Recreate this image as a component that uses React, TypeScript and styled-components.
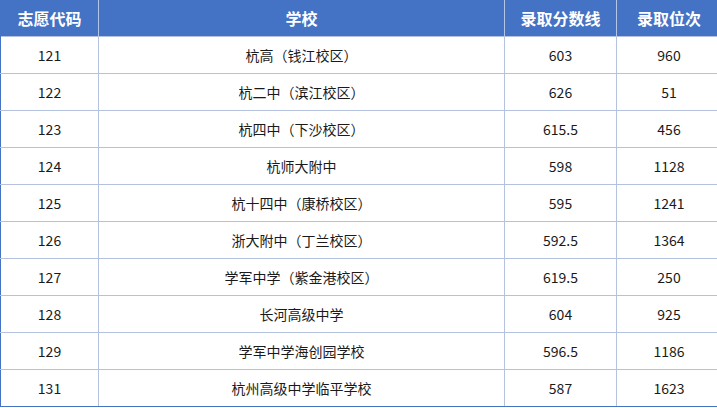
import React from 'react'
import styled, { createGlobalStyle } from 'styled-components'

const GlobalStyle = createGlobalStyle`
	html, body {
		margin: 0;
		padding: 0;
		background: #ffffff;
	}
	body {
		font-family: 'Noto Sans CJK SC', 'Noto Sans', sans-serif;
	}
`

const Table = styled.table`
	width: 717px;
	border-collapse: collapse;
	table-layout: fixed;
	border: 1px solid #4472c4;
	border-top: none;
`

const HeadCell = styled.th<{ $w: number }>`
	width: ${({ $w }) => $w}px;
	height: 36px;
	padding: 0;
	background: #4472c4;
	color: #ffffff;
	font-size: 16px;
	font-weight: 700;
	line-height: 20px;
	text-align: center;
	border-left: 1px solid #b4c6e7;
	&:first-child {
		border-left: 1px solid #4472c4;
	}
	&:last-child {
		border-right: 1px solid #4472c4;
	}
`

const Row = styled.tr`
	height: 37px;
`

const Cell = styled.td`
	padding: 0;
	color: #1a1a1a;
	font-size: 14px;
	line-height: 20px;
	text-align: center;
	border: 1px solid #b4c2e0;
	&:first-child {
		border-left: 1px solid #4472c4;
	}
	&:last-child {
		border-right: 1px solid #4472c4;
	}
`

const LastRow = styled(Row)`
	& > td {
		border-bottom: 1px solid #4472c4;
	}
`

const rows = [
	['121', '杭高（钱江校区）', '603', '960'],
	['122', '杭二中（滨江校区）', '626', '51'],
	['123', '杭四中（下沙校区）', '615.5', '456'],
	['124', '杭师大附中', '598', '1128'],
	['125', '杭十四中（康桥校区）', '595', '1241'],
	['126', '浙大附中（丁兰校区）', '592.5', '1364'],
	['127', '学军中学（紫金港校区）', '619.5', '250'],
	['128', '长河高级中学', '604', '925'],
	['129', '学军中学海创园学校', '596.5', '1186'],
	['131', '杭州高级中学临平学校', '587', '1623'],
]

const App: React.FC = () => {
	return (
		<>
			<GlobalStyle />
			<Table>
				<thead>
					<tr>
						<HeadCell $w={97}>志愿代码</HeadCell>
						<HeadCell $w={405}>学校</HeadCell>
						<HeadCell $w={111}>录取分数线</HeadCell>
						<HeadCell $w={104}>录取位次</HeadCell>
					</tr>
				</thead>
				<tbody>
					{rows.map((r, idx) => {
						const R = idx === rows.length - 1 ? LastRow : Row
						return (
							<R key={r[0]}>
								{r.map((c, i) => (
									<Cell key={i}>{c}</Cell>
								))}
							</R>
						)
					})}
				</tbody>
			</Table>
		</>
	)
}

export default App
